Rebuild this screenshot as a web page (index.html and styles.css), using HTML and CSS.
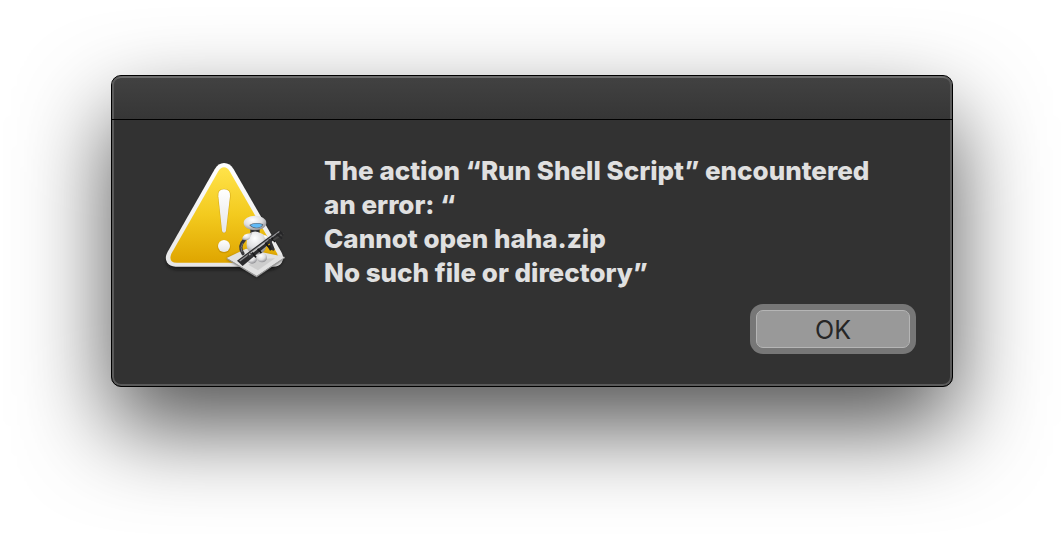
FILE: index.html
```html
<!DOCTYPE html>
<html lang="en">
<head>
    <meta charset="UTF-8">
    <meta name="viewport" content="width=device-width, initial-scale=1.0">
    <title>Automator</title>
    <link rel="stylesheet" href="styles.css">
</head>
<body>
    <div class="dialog" role="alertdialog" aria-labelledby="message">
        <header class="title-bar"></header>
        <main class="content">
            <svg class="alert-icon" viewBox="0 0 420 420" aria-hidden="true">
                <defs>
                    <linearGradient id="yellow" x1="0" y1="0" x2="0" y2="1">
                        <stop offset="0" stop-color="#ffe34a"/>
                        <stop offset="0.5" stop-color="#f3ca1e"/>
                        <stop offset="1" stop-color="#dfa500"/>
                    </linearGradient>
                    <linearGradient id="white" x1="0" y1="0" x2="0" y2="1">
                        <stop offset="0" stop-color="#ffffff"/>
                        <stop offset="1" stop-color="#e6e6e6"/>
                    </linearGradient>
                    <radialGradient id="shell" cx="0.4" cy="0.3" r="0.75">
                        <stop offset="0" stop-color="#ffffff"/>
                        <stop offset="0.55" stop-color="#dedee0"/>
                        <stop offset="1" stop-color="#85858a"/>
                    </radialGradient>
                    <filter id="soft" x="-20%" y="-20%" width="140%" height="140%">
                        <feGaussianBlur stdDeviation="5"/>
                    </filter>
                </defs>

                <!-- warning triangle -->
                <path d="M207 48Q224 48 234 65L377 308Q392 350 352 359H62Q22 352 38 314L181 65Q190 48 207 48Z" fill="#111" opacity="0.6" filter="url(#soft)"/>
                <path d="M207 39Q225 39 236 58L379 306Q389 324 380 338Q372 350 354 350H62Q44 350 36 337Q28 323 38 305L179 58Q190 39 207 39Z" fill="url(#white)"/>
                <path d="M207 52Q217 52 224 64L366 310Q377 338 350 338H65Q39 338 49 311L190 64Q197 52 207 52Z" fill="url(#yellow)"/>
                <path d="M207 116Q228 116 227 138L214 243Q212 250 207 250Q202 250 200 243L188 138Q187 116 207 116Z" fill="#b17e00" opacity="0.45"/>
                <path d="M207 118Q227 118 225 139L213 242Q212 248 207 248Q202 248 201 242L190 139Q188 118 207 118Z" fill="url(#white)"/>
                <circle cx="207" cy="290" r="20" fill="#b17e00" opacity="0.45"/>
                <circle cx="207" cy="288" r="18" fill="url(#white)"/>

                <!-- paper -->
                <path d="M215 326L276 300L390 326L305 384Z" fill="#111" opacity="0.5" filter="url(#soft)"/>
                <path d="M215 324L273 296L390 321L305 379Z" fill="#e1e1e1"/>
                <path d="M215 324L305 377L390 321L390 324L305 382L215 327Z" fill="#999"/>
                <path d="M280 344L307 327L360 325L309 361Z" fill="#aaa" opacity="0.35"/>

                <!-- robot -->
                <ellipse cx="291" cy="326" rx="15" ry="15" fill="url(#shell)"/>
                <ellipse cx="321" cy="323" rx="15" ry="14" fill="url(#shell)"/>
                <path d="M286 231H314V252H286Z" fill="#303033"/>
                <path d="M286 249Q300 240 316 249Q335 253 336 280Q333 308 312 313Q284 316 276 294Q271 268 286 249Z" fill="url(#shell)"/>
                <path d="M268 270Q249 288 264 311" fill="none" stroke="#38383b" stroke-width="10" stroke-linecap="round"/>
                <path d="M263 280Q254 292 261 306" fill="none" stroke="#77777c" stroke-width="3"/>
                <path d="M261 268Q264 248 291 250L283 267Q271 274 261 268Z" fill="url(#shell)"/>
                <path d="M324 254Q340 256 343 267L333 272Z" fill="url(#shell)"/>
                <ellipse cx="300" cy="219" rx="34" ry="22" fill="url(#shell)"/>
                <path d="M283 225Q302 214 325 223Q321 234 305 235Q289 234 283 225Z" fill="#5a6470"/>
                <path d="M286 225Q303 216 322 224Q318 233 304 233Q291 232 286 225Z" fill="#61b9f5"/>

                <!-- launcher -->
                <path d="M337 289L350 281L356 296L345 302Z" fill="#222"/>
                <path d="M246 332L371 239L382 248L263 348Z" fill="#2b2b2d"/>
                <path d="M254 333L374 244" stroke="#909093" stroke-width="4"/>
                <path d="M285 313L329 279" stroke="#c6c6c6" stroke-width="4"/>
                <path d="M291 308L303 322M308 296L319 309M331 279L342 292M350 263L360 276" stroke="#161617" stroke-width="5"/>
                <path d="M355 270L386 251" stroke="#444" stroke-width="6"/>
                <path d="M365 252L381 266M374 244L385 256" stroke="#252527" stroke-width="5"/>
                <path d="M344 271L355 298" stroke="#333336" stroke-width="8" stroke-linecap="round"/>
                <circle cx="286" cy="316" r="8" fill="#353538"/>
                <circle cx="284" cy="313" r="3" fill="#aaa"/>
            </svg>
            <div class="details">
                <p class="message" id="message">The action “Run Shell Script” encountered an error: “<br>Cannot open haha.zip<br>No such file or directory”</p>
                <button class="ok-button" type="button">OK</button>
            </div>
        </main>
    </div>
</body>
</html>
```
FILE: styles.css
```css
* {
    box-sizing: border-box;
}
body {
    min-height: 100vh;
    margin: 0;
    padding: 75px 111px;
    overflow: hidden;
    background-color: white;
    font-family: Inter, "Liberation Sans", sans-serif;
}
.dialog {
    overflow: hidden;
    border: 1px solid black;
    border-radius: 10px;
    background-color: #323232;
    box-shadow: inset 0 0 0 2px #5a5a5a, 0 40px 90px rgba(0, 0, 0, 0.68);
}
.title-bar {
    height: 44px;
    border-bottom: 1px solid black;
    background: linear-gradient(#424242, #363636);
    border-radius: 9px 9px 0 0;
    box-shadow: inset 2px 0 #5a5a5a, inset -2px 0 #5a5a5a, inset 0 2px #6c6c6c;
}
.content {
    display: flex;
    align-items: flex-start;
    gap: 29px;
    padding: 30px 36px 32px 43px;
}
.alert-icon {
    flex: none;
    width: 140px;
    height: 140px;
}
.details {
    display: flex;
    flex: 1;
    flex-direction: column;
    gap: 14px;
    padding-top: 4px;
}
.message {
    margin: 0;
    padding-right: 24px;
    color: #e0e0e0;
    font-size: 26px;
    font-weight: 800;
    line-height: 34px;
}
.ok-button {
    align-self: flex-end;
    width: 154px;
    height: 38px;
    margin: 6px;
    padding: 2px 0 0;
    border: 1px solid #b5b5b5;
    border-radius: 7px;
    background-color: #999999;
    box-shadow: 0 0 0 6px #777777;
    color: #262626;
    font-family: inherit;
    font-size: 25px;
    line-height: 34px;
}
.ok-button:active {
    background-color: #858585;
}
```
